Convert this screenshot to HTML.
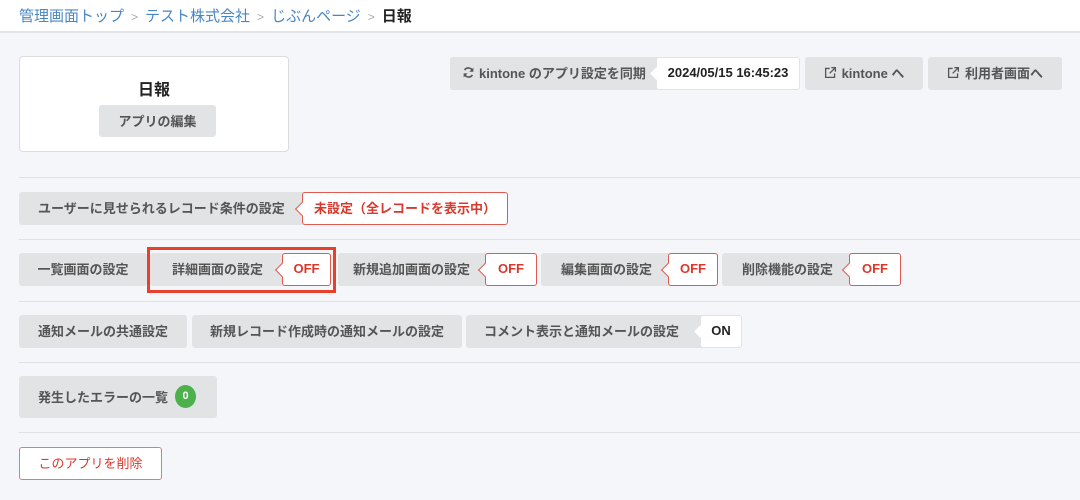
<!DOCTYPE html>
<html><head><meta charset="utf-8"><style>
*{box-sizing:border-box;margin:0;padding:0}
body{width:1080px;height:500px;background:#f5f6fa;font-family:"Liberation Sans","Noto Sans CJK JP",sans-serif;position:relative;overflow:hidden;color:#555}
.hdr{position:absolute;left:0;top:0;width:1080px;height:33px;background:#fff;border-bottom:2px solid #e3e4e8}
.bc{position:absolute;left:19px;top:5px;font-size:15px;color:#4a86c5;white-space:nowrap}
.bc .s{color:#aaa;font-size:12px;margin:0 7px}
.bc b{color:#222}
.a{position:absolute}
.btn{position:absolute;background:#e2e3e5;border-radius:3px;font-size:13px;font-weight:bold;color:#555;display:flex;align-items:center;justify-content:center;white-space:nowrap;padding-bottom:2px}
.tag{position:absolute;background:#fff;font-size:13px;font-weight:bold;display:flex;align-items:center;justify-content:center;white-space:nowrap;border-radius:3px;padding-bottom:2px}
.red{color:#d9382c;border:1px solid #e05a4f}
.tag.red::before{content:"";position:absolute;left:-6px;top:50%;margin-top:-5px;width:9px;height:9px;background:#fff;border-left:1px solid #e05a4f;border-bottom:1px solid #e05a4f;transform:rotate(45deg)}
.tag.w::before{content:"";position:absolute;left:-5px;top:50%;margin-top:-5px;width:9px;height:9px;background:#fff;transform:rotate(45deg)}
.line{position:absolute;left:19px;right:0;height:1px;background:#dfe0e3}
</style></head><body>
<div class="hdr"><div class="bc">管理画面トップ<span class="s">&gt;</span>テスト株式会社<span class="s">&gt;</span>じぶんページ<span class="s">&gt;</span><b>日報</b></div></div>

<div class="a" style="left:19px;top:56px;width:270px;height:96px;background:#fff;border:1px solid #dcdcdc;border-radius:4px"></div>
<div class="a" style="left:19px;top:76px;width:270px;text-align:center;font-size:16px;font-weight:bold;color:#222">日報</div>
<div class="btn" style="left:99px;top:105px;width:117px;height:32px">アプリの編集</div>

<div class="btn" style="left:450px;top:57px;width:210px;height:33px;justify-content:flex-start;padding-left:12px">
<svg width="13" height="13" viewBox="0 0 16 16" style="margin-right:4px"><path d="M13 6A5.5 5.5 0 0 0 3.2 5M3 10a5.5 5.5 0 0 0 9.8 1" fill="none" stroke="#555" stroke-width="2"/><path d="M14 2v5h-5zM2 14V9h5z" fill="#555"/></svg>kintone のアプリ設定を同期</div>
<div class="tag w" style="left:656px;top:57px;width:144px;height:33px;color:#222;border:1px solid #e2e3e5">2024/05/15 16:45:23</div>
<div class="btn" style="left:805px;top:57px;width:118px;height:33px"><svg width="13" height="13" viewBox="0 0 16 16" style="margin-right:5px"><path d="M7 3H2v11h11V9M9 2h5v5M14 2L7 9" fill="none" stroke="#555" stroke-width="1.6"/></svg>kintone へ</div>
<div class="btn" style="left:928px;top:57px;width:134px;height:33px"><svg width="13" height="13" viewBox="0 0 16 16" style="margin-right:5px"><path d="M7 3H2v11h11V9M9 2h5v5M14 2L7 9" fill="none" stroke="#555" stroke-width="1.6"/></svg>利用者画面へ</div>

<div class="line" style="top:177px"></div>
<div class="btn" style="left:19px;top:192px;width:290px;height:33px;justify-content:flex-start;padding-left:19px">ユーザーに見せられるレコード条件の設定</div>
<div class="tag red" style="left:302px;top:192px;width:206px;height:33px">未設定（全レコードを表示中）</div>

<div class="line" style="top:239px"></div>
<div class="btn" style="left:19px;top:253px;width:128px;height:33px">一覧画面の設定</div>
<div class="btn" style="left:150px;top:253px;width:140px;height:33px;justify-content:flex-start;padding-left:22px">詳細画面の設定</div>
<div class="tag red" style="left:282px;top:253px;width:49px;height:33px">OFF</div>
<div class="a" style="left:147px;top:247px;width:189px;height:46px;border:3px solid #e8402a"></div>
<div class="btn" style="left:338px;top:253px;width:155px;height:33px;justify-content:flex-start;padding-left:15px">新規追加画面の設定</div>
<div class="tag red" style="left:485px;top:253px;width:52px;height:33px">OFF</div>
<div class="btn" style="left:541px;top:253px;width:136px;height:33px;justify-content:flex-start;padding-left:20px">編集画面の設定</div>
<div class="tag red" style="left:668px;top:253px;width:50px;height:33px">OFF</div>
<div class="btn" style="left:722px;top:253px;width:136px;height:33px;justify-content:flex-start;padding-left:20px">削除機能の設定</div>
<div class="tag red" style="left:849px;top:253px;width:52px;height:33px">OFF</div>

<div class="line" style="top:301px"></div>
<div class="btn" style="left:19px;top:315px;width:168px;height:33px">通知メールの共通設定</div>
<div class="btn" style="left:192px;top:315px;width:270px;height:33px">新規レコード作成時の通知メールの設定</div>
<div class="btn" style="left:466px;top:315px;width:240px;height:33px;justify-content:flex-start;padding-left:18px">コメント表示と通知メールの設定</div>
<div class="tag w" style="left:700px;top:315px;width:42px;height:33px;color:#222;border:1px solid #e2e3e5">ON</div>

<div class="line" style="top:362px"></div>
<div class="btn" style="left:19px;top:376px;width:198px;height:42px;justify-content:flex-start;padding-left:19px">発生したエラーの一覧<span style="display:inline-flex;width:21px;height:23px;border-radius:50%;background:#4cb04c;color:#fff;font-size:11px;align-items:center;justify-content:center;margin-left:7px">0</span></div>

<div class="line" style="top:432px"></div>
<div class="a" style="left:19px;top:447px;width:143px;height:33px;border:1px solid #e07a73;border-radius:3px;background:#fff;color:#d9382c;font-size:13px;display:flex;align-items:center;justify-content:center;padding-bottom:2px">このアプリを削除</div>
</body></html>
